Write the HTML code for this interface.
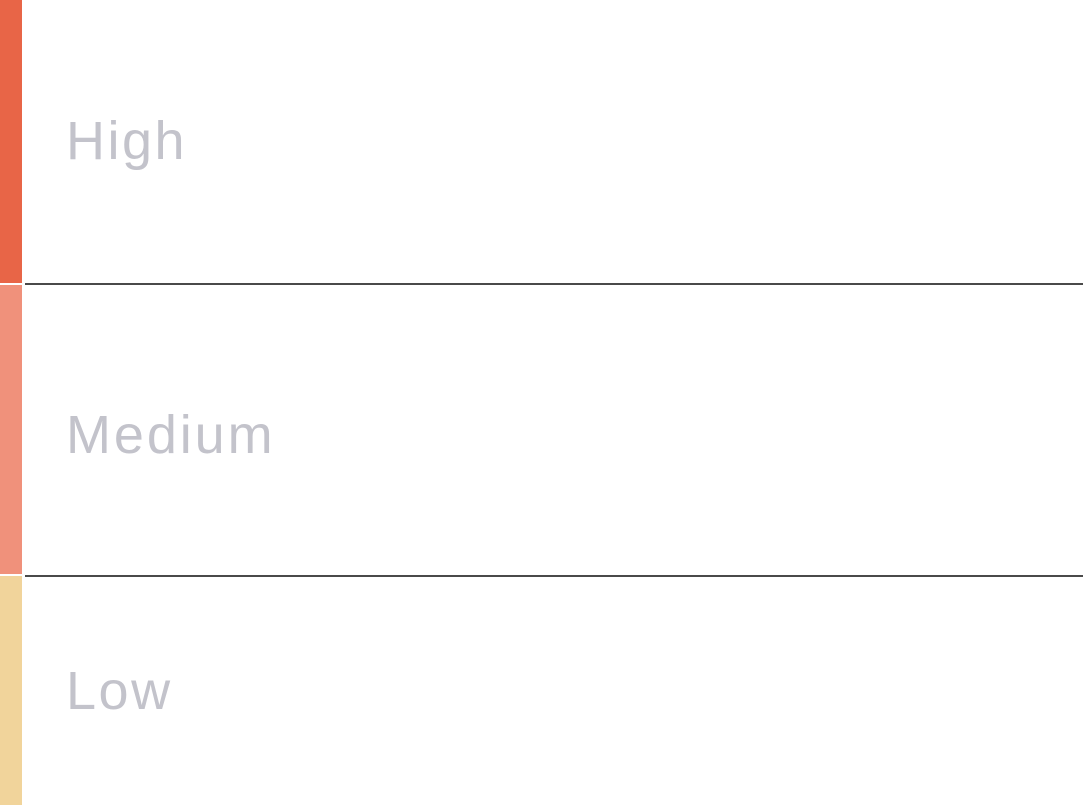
<!DOCTYPE html>
<html>
<head>
<meta charset="utf-8">
<style>
html,body{margin:0;padding:0;background:#fff;}
body{width:1083px;height:805px;position:relative;overflow:hidden;font-family:"Liberation Sans",sans-serif;}
.bar{position:absolute;left:0;width:22px;}
.line{position:absolute;left:25px;right:0;height:2px;background:#4a4a4a;}
.lbl{position:absolute;left:66px;font-size:54px;line-height:54px;letter-spacing:2.5px;color:#c3c3cb;white-space:nowrap;}
</style>
</head>
<body>
<div class="bar" style="top:0;height:283px;background:#e86547;"></div>
<div class="bar" style="top:285px;height:289px;background:#f0917b;"></div>
<div class="bar" style="top:576px;height:229px;background:#f1d49b;"></div>
<div class="line" style="top:283px;"></div>
<div class="line" style="top:575px;"></div>
<div class="lbl" style="top:114px;">High</div>
<div class="lbl" style="top:408px;letter-spacing:2.9px;">Medium</div>
<div class="lbl" style="top:664px;">Low</div>
</body>
</html>
